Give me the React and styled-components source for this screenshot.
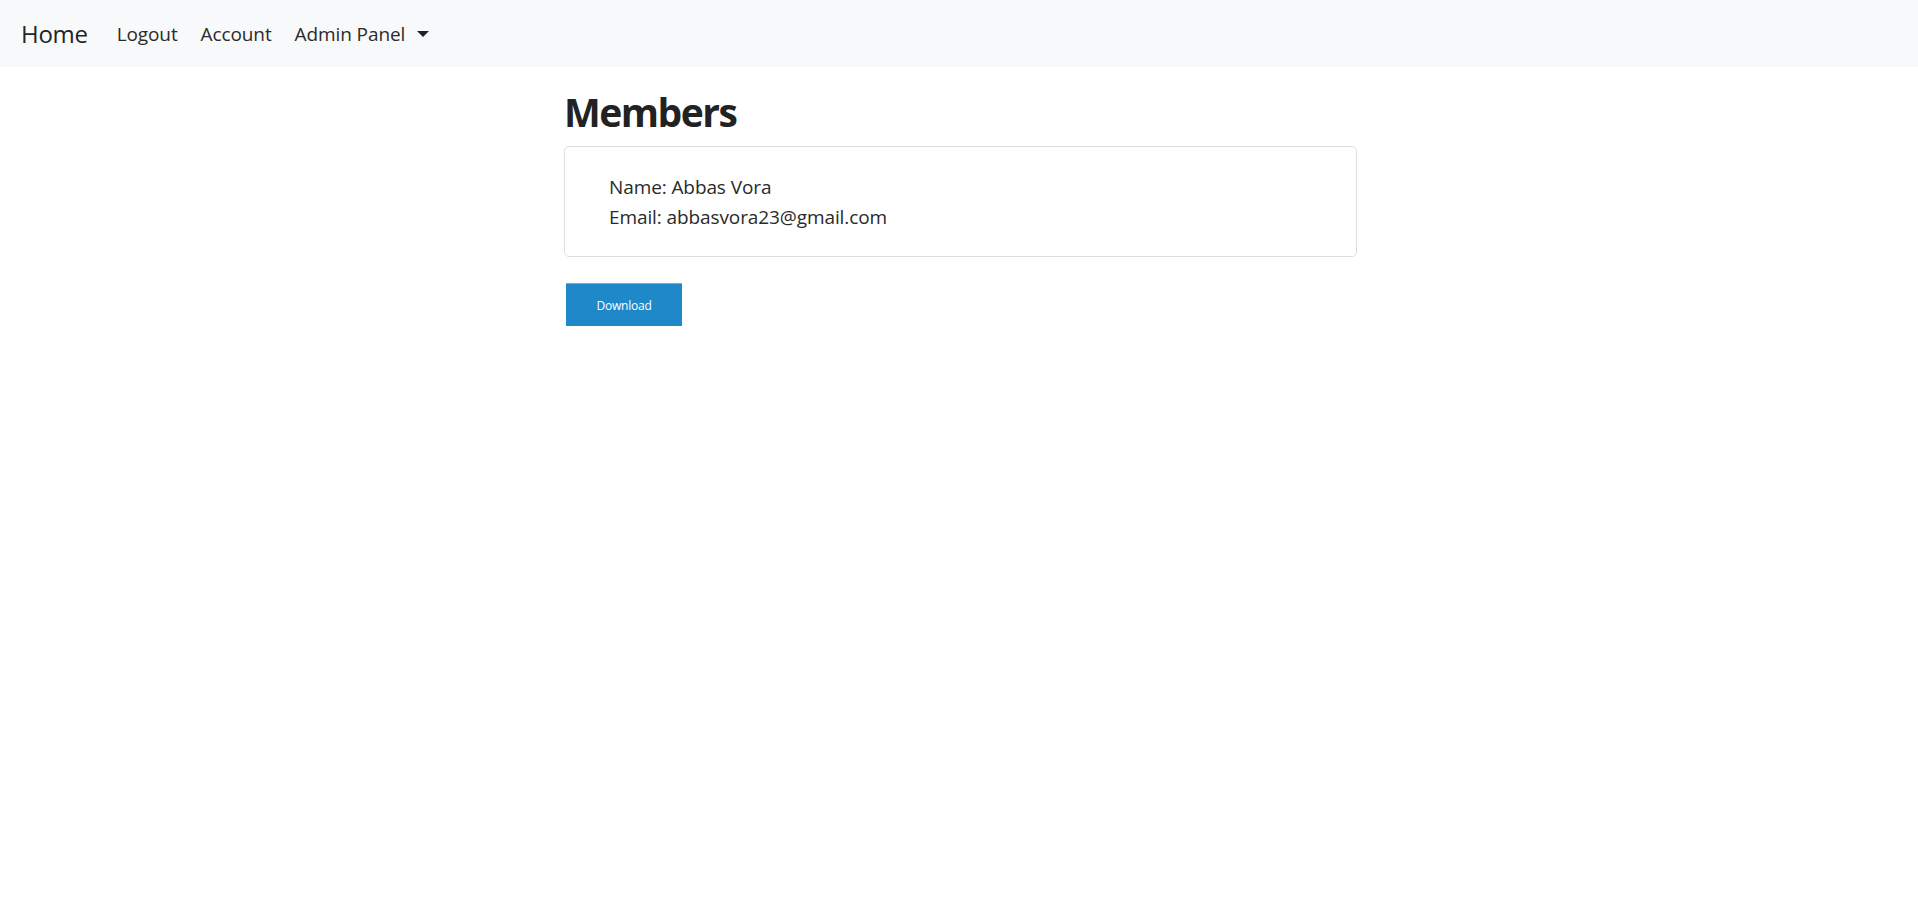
import React from "react";
import styled, { createGlobalStyle } from "styled-components";

const Global = createGlobalStyle`
  html, body { margin: 0; padding: 0; background: #fff; }
  body { font-family: "Open Sans", "Noto Sans", "Liberation Sans", sans-serif; color: #212529; }
`;

const Navbar = styled.nav`
  height: 67px;
  background: #f8f9fa;
  display: flex;
  align-items: center;
  padding: 0 21px;
  box-sizing: border-box;
`;

const Brand = styled.a`
  font-size: 24px;
  color: #212529;
  text-decoration: none;
  margin-right: 29px;
  letter-spacing: -0.3px;
`;

const NavLink = styled.a`
  font-size: 19px;
  color: #2b2b2b;
  text-decoration: none;
  margin-right: 23px;
  display: inline-flex;
  align-items: center;
  letter-spacing: -0.1px;
`;

const Caret = styled.span`
  display: inline-block;
  width: 0;
  height: 0;
  margin-left: 12px;
  border-left: 6px solid transparent;
  border-right: 6px solid transparent;
  border-top: 6px solid #222;
`;

const Main = styled.main`
  width: 793px;
  margin-left: calc(50% - 395px);
`;

const TitleWrap = styled.div`
  height: 79px;
  padding-top: 10px;
  box-sizing: border-box;
  display: flex;
  align-items: center;
`;

const TitleText = styled.h2`
  font-size: 39px;
  font-weight: 700;
  margin: 0;
  line-height: 1;
  letter-spacing: -1.5px;
  color: #222;
`;

const Card = styled.div`
  border: 1px solid #dedede;
  border-radius: 5px;
  padding: 25px 44px 21px;
  height: 111px;
  box-sizing: border-box;
`;

const Line = styled.div`
  font-size: 19px;
  line-height: 30px;
  color: #2a2a2a;
  letter-spacing: -0.1px;
`;

const Button = styled.button`
  margin: 26px 0 0 2px;
  width: 116px;
  height: 43px;
  background: #1e88c8;
  border: none;
  border-top: 1px solid #6cb2e0;
  color: #fff;
  font-family: "Open Sans", "Noto Sans", sans-serif;
  font-size: 12px;
  letter-spacing: -0.2px;
  cursor: pointer;
`;

export default function App() {
  return (
    <>
      <Global />
      <Navbar>
        <Brand href="#">Home</Brand>
        <NavLink href="#">Logout</NavLink>
        <NavLink href="#">Account</NavLink>
        <NavLink href="#">
          Admin Panel
          <Caret />
        </NavLink>
      </Navbar>
      <Main>
        <TitleWrap>
          <TitleText>Members</TitleText>
        </TitleWrap>
        <Card>
          <Line>Name: Abbas Vora</Line>
          <Line>Email: abbasvora23@gmail.com</Line>
        </Card>
        <Button>Download</Button>
      </Main>
    </>
  );
}
